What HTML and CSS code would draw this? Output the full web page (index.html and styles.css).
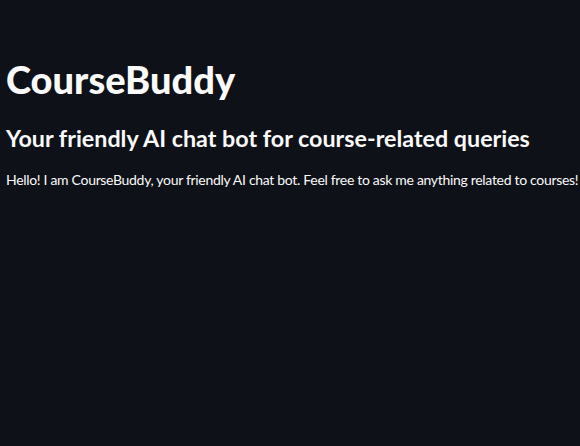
FILE: index.html
```html
<!DOCTYPE html>
<html>
<head>
<meta charset="utf-8">
<link rel="stylesheet" href="styles.css">
</head>
<body>
<main class="app">
  <h1 class="title">CourseBuddy</h1>
  <h2 class="subtitle">Your friendly AI chat bot for course-related queries</h2>
  <p class="intro">Hello! I am CourseBuddy, your friendly AI chat bot. Feel free to ask me anything related to courses!</p>
</main>
</body>
</html>
```
FILE: styles.css
```css
html, body {
  margin: 0;
  padding: 0;
  background: #0e1117;
  color: #fafafa;
  font-family: Lato, "Open Sans", sans-serif;
  height: 100%;
  overflow: hidden;
}
.app {
  padding: 54px 0 0 6px;
  white-space: nowrap;
}
.title {
  margin: 0;
  font-size: 38px;
  font-weight: 900;
  line-height: 50px;
}
.subtitle {
  margin: 17px 0 0;
  font-size: 23.3px;
  font-weight: 700;
  line-height: 34px;
}
.intro {
  margin: 14px 0 0;
  font-size: 14px;
  letter-spacing: -0.31px;
  line-height: 22px;
}
```
